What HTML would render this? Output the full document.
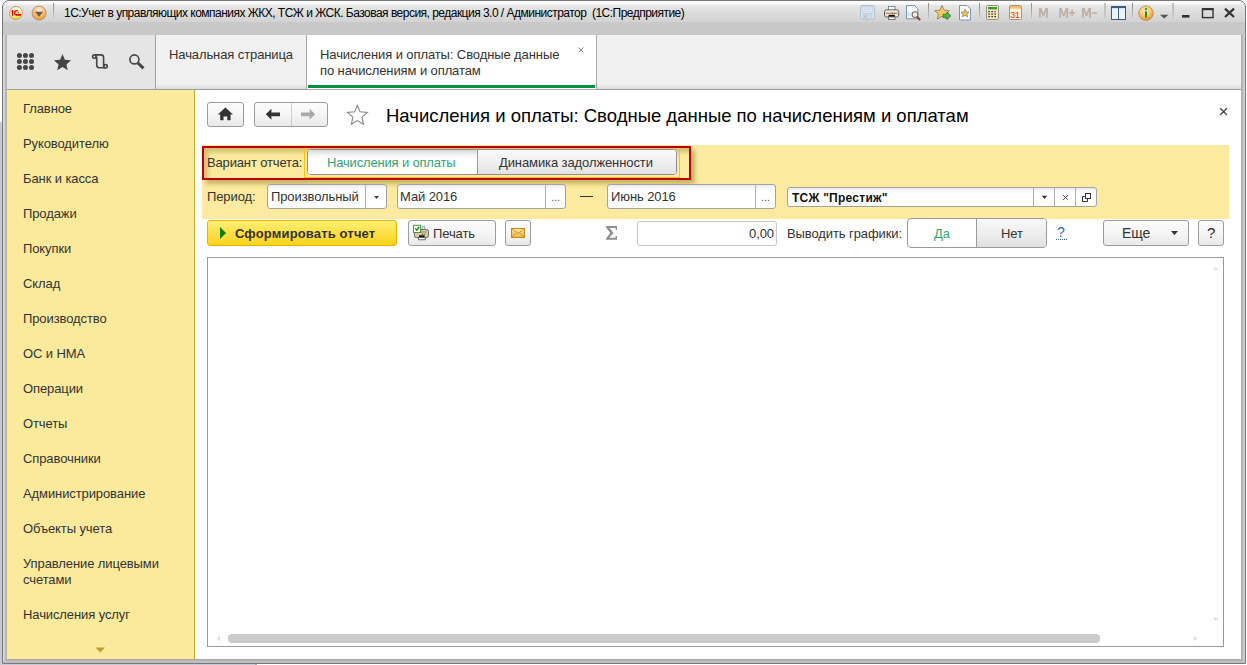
<!DOCTYPE html>
<html><head><meta charset="utf-8">
<style>
*{box-sizing:border-box}
html,body{margin:0;padding:0;width:1247px;height:665px;overflow:hidden;background:#fff;font-family:"Liberation Sans",sans-serif;}
.a{position:absolute}
.t{position:absolute;font-size:13px;line-height:1;white-space:nowrap;color:#333;letter-spacing:-.1px}
#win{position:absolute;left:2px;top:0;width:1244px;height:664px;border:1px solid #787878;border-radius:7px 7px 0 0;background:linear-gradient(#fdfdfd 0,#f8f8f8 3px,#e6e6e6 4.5px,#dadada 14px,#d3d3d3 20.5px,#c9c9c9 21.5px,#c8c8c8 34px,#b9b9b9 36px);}
#frameL{display:none}
#toolbar{left:7px;top:35px;width:1234px;height:55px;background:linear-gradient(#f1f1f1 0,#f1f1f1 49px,#dbdbdb 54px);border-bottom:1px solid #9c9c9c}
#navicons{left:7px;top:35px;width:149px;height:55px;background:#e5e5e5;border-right:1px solid #a2a2a2;border-bottom:1px solid #9c9c9c}
#sidebar{left:7px;top:90px;width:187px;height:569px;background:#fbea9c}
#sideline{left:194px;top:90px;width:1px;height:569px;background:#c9ae2c}
#main{left:195px;top:90px;width:1046px;height:569px;background:#fff}
.s{left:23px}
.btn{position:absolute;border:1px solid #9c9c9c;border-radius:3px;background:linear-gradient(#fdfdfd,#f3f3f3 60%,#e9e9e9)}
.inp{position:absolute;border:1px solid #a3a3a3;border-radius:3px;background:linear-gradient(#e9e9e9,#f8f8f8 3px,#fff 6px)}
.sep{position:absolute;width:1px;background:#b8b8b8}
</style></head><body>
<div id="win"></div>
<div class="a" id="frameL"></div>
<div class="a" style="left:0;top:122px;width:2px;height:543px;background:#c6cad6"></div>
<div class="a" style="left:3px;top:35px;width:2px;height:628px;background:#d6d6d6"></div>
<div class="a" style="left:5px;top:35px;width:2px;height:625px;background:#b6b6b6"></div>
<div class="a" style="left:1241px;top:35px;width:2px;height:625px;background:#b2b2b2"></div>
<div class="a" style="left:1243px;top:35px;width:2px;height:628px;background:#cdcdcd"></div>
<div class="a" style="left:5px;top:659px;width:1238px;height:1px;background:#a9a9a9"></div>
<div class="a" style="left:5px;top:660px;width:1238px;height:1px;background:#b6b6b6"></div>
<div class="a" style="left:3px;top:661px;width:1242px;height:2px;background:#bfbfbf"></div>
<div class="a" style="left:0;top:664px;width:255px;height:1px;background:#c6cad6"></div>
<div class="a" style="left:255px;top:664px;width:2px;height:1px;background:#aaa"></div>
<div class="a" id="toolbar"></div>
<div class="a" id="navicons"></div>
<div class="a" id="sidebar"></div>
<div class="a" id="sideline"></div>
<div class="a" id="main"></div>

<!-- TITLEBAR -->
<svg class="a" style="left:0;top:0" width="1247" height="34" viewBox="0 0 1247 34">
  <defs>
    <linearGradient id="gsep" x1="0" y1="0" x2="0" y2="1"><stop offset="0" stop-color="#8c8c8c"/><stop offset="1" stop-color="#c4c4c4"/></linearGradient>
    <linearGradient id="g1c" x1="0" y1="0" x2="0" y2="1"><stop offset="0" stop-color="#fffde8"/><stop offset=".45" stop-color="#fff8b0"/><stop offset=".8" stop-color="#fbe850"/><stop offset="1" stop-color="#f4d020"/></linearGradient>
    <radialGradient id="gor" cx="50%" cy="30%" r="65%"><stop offset="0" stop-color="#fff1dc"/><stop offset=".55" stop-color="#fcc27a"/><stop offset="1" stop-color="#f19a2a"/></radialGradient>
    <radialGradient id="ginfo" cx="45%" cy="35%" r="60%"><stop offset="0" stop-color="#fff4c8"/><stop offset=".6" stop-color="#fbc870"/><stop offset="1" stop-color="#e8962a"/></radialGradient>
  </defs>
  <circle cx="16" cy="12.9" r="6.4" fill="url(#g1c)" stroke="#b89070" stroke-width=".9"/>
  <path d="M11 11.2 L12.4 9.9 H13.3 V15.7 H12 V11.9 Z" fill="#e00000"/>
  <path d="M17.9 10.6 H16.6 Q14.7 10.6 14.7 12.9 Q14.7 14.6 16.2 14.8" fill="none" stroke="#e00000" stroke-width="1.3"/>
  <rect x="15.8" y="13.9" width="5.2" height="1.8" fill="#e00000"/>
  <circle cx="18.4" cy="12.3" r=".65" fill="#e00000"/>
  <circle cx="39.1" cy="13.1" r="7" fill="url(#gor)" stroke="#9a8a7a" stroke-width=".8"/>
  <path d="M34.9 11.8 H43.2 L39.05 16.8 Z" fill="#6a5a4a"/>
  <rect x="53" y="3" width="1" height="15" fill="url(#gsep)"/>
  <!-- floppy (disabled) -->
  <g>
  <rect x="860.6" y="5.6" width="13.8" height="13.6" rx="1" fill="#e2e9ee" stroke="#a8c0d0" stroke-width="1"/>
  <rect x="862.5" y="6.5" width="10" height="5.2" fill="#f0f4f6" stroke="#b8ccd8" stroke-width=".7"/>
  <rect x="863.5" y="7.6" width="8" height=".8" fill="#b0c8d8"/><rect x="863.5" y="9.4" width="8" height=".8" fill="#b0c8d8"/>
  <rect x="863" y="13.6" width="9" height="5.4" fill="#d0dce4" stroke="#b0c4d0" stroke-width=".6"/>
  <rect x="864.5" y="14.8" width="2" height="3" fill="#a8bccc"/>
  </g>
  <!-- printer -->
  <rect x="888.5" y="6.5" width="6.5" height="4" fill="#fff" stroke="#6a7a8a" stroke-width=".8"/>
  <rect x="884.5" y="9.8" width="14.2" height="7.2" rx="2" fill="#efe8d8" stroke="#555" stroke-width=".9"/>
  <rect x="885.5" y="12.6" width="12" height="1.4" fill="#b09a78"/>
  <rect x="888.6" y="14.8" width="6.2" height="2" fill="#111"/>
  <rect x="888.4" y="17" width="6.6" height="2.4" fill="#fff" stroke="#555" stroke-width=".8"/>
  <circle cx="892.3" cy="13.3" r=".7" fill="#e02020"/><circle cx="894.6" cy="13.3" r=".7" fill="#20b020"/>
  <!-- preview -->
  <path d="M906.5 5.5 H914.5 L917.8 8.8 V18.8 H906.5 Z" fill="#f6f9fc" stroke="#6a8aaa" stroke-width=".9"/>
  <rect x="907.5" y="12" width="3" height="4.5" fill="#cfe0f0"/>
  <circle cx="915" cy="14.6" r="2.9" fill="#e4f0fa" stroke="#8a6a4a" stroke-width="1.1"/>
  <path d="M917 16.8 L920.2 20" stroke="#7a4a28" stroke-width="2"/>
  <rect x="928" y="3" width="1" height="15" fill="url(#gsep)"/>
  <!-- star + arrow -->
  <path d="M942 5.5 L944.3 10.2 L949.4 10.7 L945.6 14 L946.7 19 L942 16.4 L937.3 19 L938.4 14 L934.6 10.7 L939.7 10.2 Z" fill="#f8c860" stroke="#8a7a5a" stroke-width=".8"/>
  <path d="M943 14.2 H947 V12 L951 15.8 L947 19.6 V17.4 H943 Z" fill="#4ab83a" stroke="#2a7a2a" stroke-width=".7"/>
  <!-- doc w star -->
  <path d="M959.5 5.5 H967 L970.5 9 V20 H959.5 Z" fill="#fff" stroke="#6a8aaa" stroke-width=".9"/>
  <path d="M965 9.3 L966.3 12 L969 12.3 L967 14.1 L967.6 16.8 L965 15.4 L962.4 16.8 L963 14.1 L961 12.3 L963.7 12 Z" fill="#f4c050" stroke="#7a6a4a" stroke-width=".6"/>
  <rect x="979" y="3" width="1" height="15" fill="url(#gsep)"/>
  <!-- calculator -->
  <rect x="986.5" y="5.5" width="12" height="14" rx="1" fill="#f8e8b8" stroke="#8a8a7a" stroke-width=".9"/>
  <rect x="988" y="7" width="9" height="2.4" fill="#3a9a3a"/>
  <g fill="#333"><rect x="988.3" y="11" width="1.6" height="1.3"/><rect x="991.3" y="11" width="1.6" height="1.3"/><rect x="994.3" y="11" width="1.6" height="1.3" fill="#c03030"/><rect x="988.3" y="13.5" width="1.6" height="1.3"/><rect x="991.3" y="13.5" width="1.6" height="1.3"/><rect x="994.3" y="13.5" width="1.6" height="1.3"/><rect x="988.3" y="16" width="1.6" height="1.3"/><rect x="991.3" y="16" width="1.6" height="1.3"/><rect x="994.3" y="16" width="1.6" height="1.3"/></g>
  <!-- calendar -->
  <rect x="1009.5" y="5.5" width="12" height="14" rx="1" fill="#fbf0d8" stroke="#9a8a7a" stroke-width=".9"/>
  <rect x="1010" y="6" width="11" height="2.6" fill="#f0c070"/>
  <text x="1010.2" y="17.6" font-family="Liberation Sans" font-size="9.6" fill="#e83018" textLength="9.8" lengthAdjust="spacingAndGlyphs">31</text>
  <rect x="1031" y="3" width="1" height="15" fill="url(#gsep)"/>
  <!-- M M+ M- -->
  <path d="M1038.9 17.7 V8 H1041.4 L1043.4 13.6 L1045.4 8 H1047.9 V17.7 H1046.0 V11.2 L1044.2 16.3 H1042.6000000000001 L1040.8000000000002 11.2 V17.7 Z M1059.2 17.7 V8 H1061.7 L1063.7 13.6 L1065.7 8 H1068.2 V17.7 H1066.3 V11.2 L1064.5 16.3 H1062.9 L1061.1000000000001 11.2 V17.7 Z M1082 17.7 V8 H1084.5 L1086.5 13.6 L1088.5 8 H1091 V17.7 H1089.1 V11.2 L1087.3 16.3 H1085.7 L1083.9 11.2 V17.7 Z M1069.2 12.1 H1071.3 V9.8 H1072.9 V12.1 H1075 V13.7 H1072.9 V16 H1071.3 V13.7 H1069.2 Z M1091.6 12.2 H1097 V13.8 H1091.6 Z" fill="#bcb2a8"/>
  <rect x="1104.5" y="3" width="1" height="15" fill="url(#gsep)"/>
  <!-- panel -->
  <rect x="1111.5" y="6.5" width="14" height="13" fill="#eaf2fa" stroke="#3a5a8a" stroke-width="1"/>
  <rect x="1111.5" y="6.5" width="14" height="1.6" fill="#3a5a8a"/>
  <rect x="1118" y="7" width="1" height="12" fill="#3a5a8a"/>
  <rect x="1132" y="3" width="1" height="15" fill="url(#gsep)"/>
  <!-- info -->
  <circle cx="1146" cy="13.2" r="7.3" fill="url(#ginfo)" stroke="#b88a5a" stroke-width=".8"/>
  <circle cx="1146" cy="9.1" r="1.2" fill="#2a8a2a"/>
  <rect x="1145" y="11.3" width="2" height="6.2" fill="#2a8a2a"/>
  <path d="M1160 14.8 H1168.4 L1164.2 18.4 Z" fill="#555"/>
  <rect x="1172.5" y="3" width="1" height="15" fill="url(#gsep)"/>
  <!-- min max close -->
  <rect x="1182" y="15" width="7.5" height="2.6" fill="#333"/>
  <rect x="1202.5" y="8.8" width="10.5" height="8.8" fill="none" stroke="#333" stroke-width="1.4"/>
  <rect x="1202" y="8.2" width="11.5" height="2" fill="#333"/>
  <path d="M1225 8.6 L1234 17 M1234 8.6 L1225 17" stroke="#333" stroke-width="2.2"/>
</svg>
<div class="a" style="left:64px;top:7px;font-size:12px;letter-spacing:-.52px;line-height:1;white-space:nowrap;color:#000">1С:Учет в управляющих компаниях ЖКХ, ТСЖ и ЖСК. Базовая версия, редакция 3.0 / Администратор&nbsp; (1С:Предприятие)</div>

<!-- NAV ICONS -->
<svg class="a" style="left:0;top:35px" width="160" height="54" viewBox="0 35 160 54">
  <g fill="#454545">
    <circle cx="19.4" cy="55.4" r="2.5"/><circle cx="25.45" cy="55.4" r="2.5"/><circle cx="31.5" cy="55.4" r="2.5"/>
    <circle cx="19.4" cy="61.4" r="2.5"/><circle cx="25.45" cy="61.4" r="2.5"/><circle cx="31.5" cy="61.4" r="2.5"/>
    <circle cx="19.4" cy="67.45" r="2.5"/><circle cx="25.45" cy="67.45" r="2.5"/><circle cx="31.5" cy="67.45" r="2.5"/>
    <path d="M62.5 54 L64.9 59.8 L71 60.3 L66.4 64.4 L67.8 70.2 L62.5 67 L57.2 70.2 L58.6 64.4 L54 60.3 L60.1 59.8 Z"/>
  </g>
  <g fill="none" stroke="#454545" stroke-width="1.6">
    <path d="M94.3 54.9 H101 Q103.6 54.9 103.6 57.5 V66.4"/>
    <path d="M96.7 56.5 V65 Q96.7 67.7 99.4 67.7 H105.6"/>
    <circle cx="94.3" cy="56.5" r="1.7"/>
    <circle cx="105.6" cy="66.3" r="1.7"/>
    <circle cx="134.4" cy="59.4" r="4.5"/>
  </g>
  <path d="M138 63 L143.5 68.3" stroke="#454545" stroke-width="3"/>
</svg>

<!-- TABS -->
<div class="t" style="left:169px;top:48px">Начальная страница</div>
<div class="a" style="left:306px;top:35px;width:291px;height:55px;background:#fff;border-left:1px solid #a8a8a8;border-right:1px solid #a8a8a8;border-bottom:1px solid #a8a8a8"></div>
<div class="a" style="left:308px;top:85px;width:287px;height:3px;background:#00913c"></div>
<div class="t" style="left:320px;top:48px">Начисления и оплаты: Сводные данные</div>
<div class="t" style="left:320px;top:64px">по начислениям и оплатам</div>
<svg class="a" style="left:575px;top:44px" width="12" height="12"><path d="M3.5 3.5 L8.5 8.5 M8.5 3.5 L3.5 8.5" stroke="#8a8a8a" stroke-width="1"/></svg>

<!-- SIDEBAR -->
<div class="t s" style="top:102px">Главное</div>
<div class="t s" style="top:137px">Руководителю</div>
<div class="t s" style="top:172px">Банк и касса</div>
<div class="t s" style="top:207px">Продажи</div>
<div class="t s" style="top:242px">Покупки</div>
<div class="t s" style="top:277px">Склад</div>
<div class="t s" style="top:312px">Производство</div>
<div class="t s" style="top:347px">ОС и НМА</div>
<div class="t s" style="top:382px">Операции</div>
<div class="t s" style="top:417px">Отчеты</div>
<div class="t s" style="top:452px">Справочники</div>
<div class="t s" style="top:487px">Администрирование</div>
<div class="t s" style="top:522px">Объекты учета</div>
<div class="t s" style="top:557px">Управление лицевыми</div>
<div class="t s" style="top:573px">счетами</div>
<div class="t s" style="top:608px">Начисления услуг</div>
<svg class="a" style="left:90px;top:644px" width="20" height="12"><path d="M5.5 3.5 H15 L10.25 8.5 Z" fill="#c0a028"/></svg>

<!-- HEADER -->
<div class="btn" style="left:207px;top:102px;width:37px;height:25px"></div>
<div class="btn" style="left:254px;top:102px;width:74px;height:25px"></div>
<div class="a" style="left:291px;top:103px;width:1px;height:23px;background:#cfcfcf"></div>
<svg class="a" style="left:200px;top:95px" width="140" height="40" viewBox="200 95 140 40">
  <path d="M225.4 107.4 L233 114.4 H230.6 V120.2 H227.3 V116.6 H223.5 V120.2 H220.2 V114.4 H217.8 Z" fill="#333"/>
  <path d="M265.8 114.3 L271.4 108.8 V112.4 H280 V116.2 H271.4 V119.8 Z" fill="#333"/>
  <path d="M315.2 114.3 L309.6 108.8 V112.4 H301 V116.2 H309.6 V119.8 Z" fill="#aaa"/>
</svg>
<svg class="a" style="left:340px;top:100px" width="36" height="32" viewBox="340 100 36 32">
  <path d="M357.4 105.5 L360.1 111.7 L367.4 112.4 L361.9 117.2 L363.5 124.3 L357.4 120.6 L351.3 124.3 L352.9 117.2 L347.4 112.4 L354.7 111.7 Z" fill="#fff" stroke="#8a8a8a" stroke-width="1.1"/>
</svg>
<div class="a" style="left:386px;top:107px;font-size:18.5px;line-height:1;white-space:nowrap;color:#000">Начисления и оплаты: Сводные данные по начислениям и оплатам</div>
<svg class="a" style="left:1216px;top:104px" width="16" height="16" viewBox="1216 104 16 16"><path d="M1220.2 108.2 L1227 115 M1227 108.2 L1220.2 115" stroke="#444" stroke-width="1.3"/></svg>

<!-- YELLOW SETTINGS PANEL -->
<div class="a" style="left:202px;top:145px;width:1027px;height:74px;background:#fbeaa0"></div>
<!-- red highlight box -->
<div class="a" style="left:202px;top:146px;width:489px;height:34px;border:2px solid #c00000;box-shadow:4px 4px 4px rgba(120,100,20,.4), inset 4px 4px 4px rgba(120,100,20,.32)"></div>
<div class="a" style="left:304px;top:148px;width:1px;height:30px;background:#f5c020"></div>
<div class="a" style="left:304px;top:177px;width:376px;height:1px;background:#f5c020"></div>
<div class="a" style="left:679px;top:148px;width:1px;height:30px;background:#f5c020"></div>
<div class="t" style="left:207px;top:156px;letter-spacing:-.15px">Вариант отчета:</div>
<div class="a" style="left:307px;top:149px;width:370px;height:26px;border:1px solid #8f8f8f;border-radius:4px;overflow:hidden;background:#fff">
  <div class="a" style="left:0;top:0;width:169px;height:24px;background:linear-gradient(#d8d8d8,#f4f4f4 5px,#fff 9px)"></div>
  <div class="a" style="left:169px;top:0;width:1px;height:24px;background:#9a9a9a"></div>
  <div class="a" style="left:170px;top:0;width:199px;height:24px;background:linear-gradient(#fafafa,#eeeeee 60%,#e2e2e2)"></div>
</div>
<div class="t" style="left:327px;top:156px;color:#30a574;letter-spacing:-.17px">Начисления и оплаты</div>
<div class="t" style="left:499px;top:156px">Динамика задолженности</div>

<!-- period row -->
<div class="t" style="left:207px;top:190px">Период:</div>
<div class="inp" style="left:267px;top:184px;width:120px;height:25px"></div>
<div class="a" style="left:365px;top:185px;width:1px;height:23px;background:#b0b0b0"></div>
<svg class="a" style="left:370px;top:192px" width="12" height="10"><path d="M4 4 H9 L6.5 7 Z" fill="#444"/></svg>
<div class="t" style="left:271px;top:190px">Произвольный</div>

<div class="inp" style="left:397px;top:184px;width:169px;height:25px"></div>
<div class="a" style="left:545px;top:185px;width:1px;height:23px;background:#b0b0b0"></div>
<div class="t" style="left:551px;top:192px;font-size:11px;color:#555">...</div>
<div class="t" style="left:400px;top:190px">Май 2016</div>
<div class="a" style="left:580px;top:196px;width:13px;height:1px;background:#333"></div>

<div class="inp" style="left:607px;top:184px;width:169px;height:25px"></div>
<div class="a" style="left:755px;top:185px;width:1px;height:23px;background:#b0b0b0"></div>
<div class="t" style="left:761px;top:192px;font-size:11px;color:#555">...</div>
<div class="t" style="left:611px;top:190px">Июнь 2016</div>

<div class="inp" style="left:787px;top:187px;width:310px;height:20px"></div>
<div class="a" style="left:1033px;top:188px;width:1px;height:18px;background:#b0b0b0"></div>
<div class="a" style="left:1054px;top:188px;width:1px;height:18px;background:#b0b0b0"></div>
<div class="a" style="left:1075px;top:188px;width:1px;height:18px;background:#b0b0b0"></div>
<svg class="a" style="left:1033px;top:188px" width="64" height="18" viewBox="1033 188 64 18">
  <path d="M1041.8 195.8 H1047.2 L1044.5 199 Z" fill="#333"/>
  <path d="M1063.2 195.2 L1067.9 199.8 M1067.9 195.2 L1063.2 199.8" stroke="#333" stroke-width=".9"/>
  <rect x="1085.5" y="193.5" width="5" height="5" fill="none" stroke="#333" stroke-width="1"/>
  <path d="M1085 196.5 H1082.5 V201.5 H1087.5 V199" fill="none" stroke="#333" stroke-width="1"/>
</svg>
<div class="t" style="left:792px;top:192px;font-size:12px;letter-spacing:.25px;font-weight:700;color:#111">ТСЖ "Престиж"</div>

<!-- ROW 3 -->
<div class="a" style="left:207px;top:220px;width:190px;height:26px;border:1px solid #e9b300;border-radius:3px;background:linear-gradient(#fff07a,#ffe14a 45%,#fcd21e)"></div>
<svg class="a" style="left:215px;top:224px" width="16" height="18"><path d="M5 3 L11 9 L5 15 Z" fill="#008200"/></svg>
<div class="t" style="left:235px;top:227px;font-weight:700;color:#333;letter-spacing:.15px">Сформировать отчет</div>

<div class="btn" style="left:408px;top:220px;width:88px;height:26px"></div>
<svg class="a" style="left:410px;top:222px" width="22" height="20" viewBox="410 222 22 20">
  <path d="M422.3 232 V226.3 H424.8 V232" fill="#fff" stroke="#7a9ab8" stroke-width=".9"/>
  <rect x="414.5" y="229.5" width="14" height="8" rx="1.8" fill="#dccbaa" stroke="#6a6a6a" stroke-width="1"/>
  <rect x="416" y="231" width="11" height="2" fill="#b8a88a"/>
  <rect x="419" y="235.3" width="5.6" height="2" fill="#151515"/>
  <rect x="418.5" y="237.6" width="6.8" height="2.2" fill="#fff" stroke="#555" stroke-width=".8"/>
  <circle cx="422.5" cy="234.3" r=".8" fill="#e02020"/><circle cx="424.6" cy="234.3" r=".8" fill="#20b020"/>
  <rect x="413.6" y="225.3" width="7" height="7.2" fill="#fff" stroke="#3f9a2f" stroke-width="1"/>
  <path d="M415.2 228.4 L416.8 230.2 L419.2 227" stroke="#1f7a1f" stroke-width="1.3" fill="none"/>
</svg>
<div class="t" style="left:433px;top:227px">Печать</div>

<div class="btn" style="left:505px;top:220px;width:26px;height:26px"></div>
<svg class="a" style="left:508px;top:225px" width="20" height="16" viewBox="508 225 20 16">
  <defs><linearGradient id="genv" x1="0" y1="0" x2="0" y2="1"><stop offset="0" stop-color="#fdeaa8"/><stop offset="1" stop-color="#ebb448"/></linearGradient></defs><rect x="511.5" y="228.5" width="13" height="9" fill="url(#genv)" stroke="#c8861a" stroke-width="1"/>
  <path d="M511.8 228.8 L518 233.5 L524.2 228.8 M511.8 237.2 L516 233 M524.2 237.2 L520 233" stroke="#c8861a" stroke-width=".8" fill="none"/>
</svg>

<svg class="a" style="left:600px;top:222px" width="22" height="22" viewBox="600 222 22 22"><path d="M606 226.1 H617 V229.7 H615.6 V228 H609.6 L613.6 232.9 L609.2 237.8 H615.6 V236 H617 V239.7 H606 V238.4 L610.4 232.9 L606 227.4 Z" fill="#8f8f8f"/></svg>
<div class="inp" style="left:637px;top:221px;width:140px;height:25px;border-color:#c8c8c8;background:#fff"></div>
<div class="t" style="left:749px;top:227px">0,00</div>
<div class="t" style="left:787px;top:227px">Выводить графики:</div>

<div class="a" style="left:907px;top:218px;width:140px;height:30px;border:1px solid #9a9a9a;border-radius:4px;overflow:hidden;background:#fff">
  <div class="a" style="left:68px;top:0;width:1px;height:28px;background:#9a9a9a"></div>
  <div class="a" style="left:69px;top:0;width:70px;height:28px;background:linear-gradient(#f8f8f8,#ececec 60%,#e0e0e0)"></div>
</div>
<div class="t" style="left:934px;top:227px;color:#30a574">Да</div>
<div class="t" style="left:1001px;top:227px">Нет</div>
<div class="t" style="left:1057px;top:225px;font-size:14px;color:#2a6ab8">?</div>
<div class="a" style="left:1056px;top:239px;width:11px;height:1px;border-top:1px dotted #2a6ab8"></div>

<div class="btn" style="left:1103px;top:220px;width:86px;height:26px"></div>
<div class="t" style="left:1122px;top:226px;font-size:14px">Еще</div>
<svg class="a" style="left:1168px;top:228px" width="14" height="10"><path d="M3 3 H10 L6.5 7 Z" fill="#333"/></svg>
<div class="btn" style="left:1198px;top:220px;width:26px;height:26px"></div>
<div class="t" style="left:1207px;top:225px;font-size:15px;color:#2a2a2a">?</div>

<!-- REPORT AREA -->
<div class="a" style="left:207px;top:257px;width:1017px;height:390px;border:1px solid #9a9a9a;background:#fff"></div>
<div class="a" style="left:228px;top:634px;width:872px;height:9px;border-radius:4px;background:#cbcbcb"></div>
<svg class="a" style="left:207px;top:257px" width="1017" height="390" viewBox="207 257 1017 390">
  <path d="M220 635.8 V641.2 L216.8 638.5 Z" fill="#dcdcdc"/>
  <path d="M1194 635.8 V641.2 L1197.2 638.5 Z" fill="#dcdcdc"/>
  <path d="M1213 618 H1218.4 L1215.7 621 Z" fill="#dcdcdc"/>
  <path d="M1213 269.8 H1218.4 L1215.7 267 Z" fill="#dcdcdc"/>
</svg>

</body></html>
